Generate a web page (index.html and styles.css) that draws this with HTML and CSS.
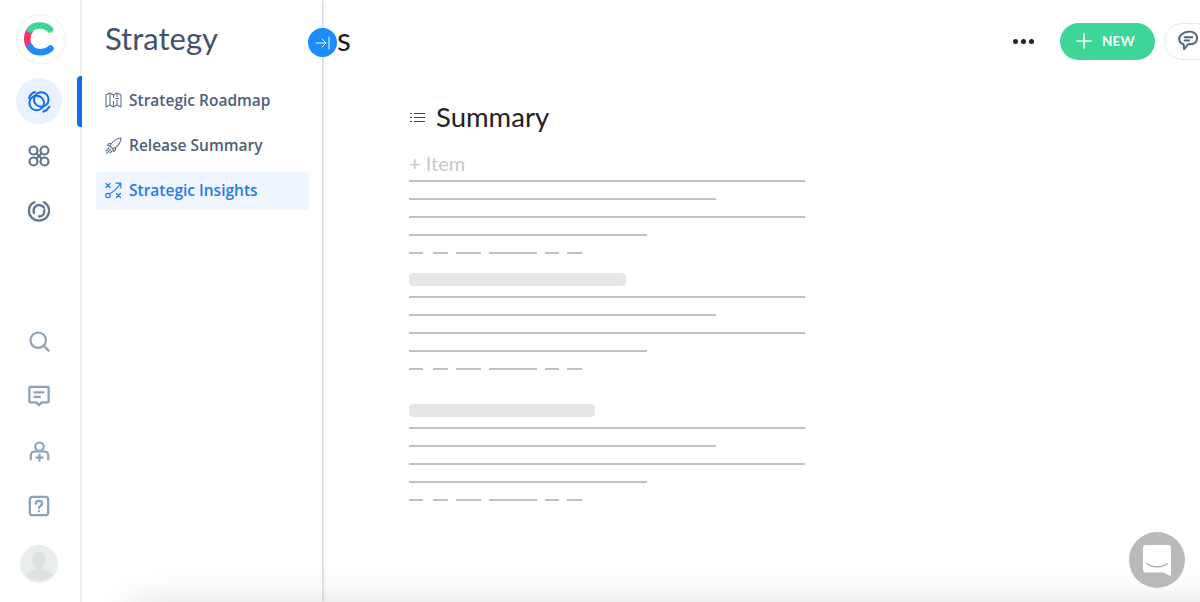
FILE: index.html
```html
<!DOCTYPE html>
<html lang="en">
<head>
<meta charset="UTF-8">
<meta name="viewport" content="width=device-width, initial-scale=1.0">
<title>Strategy</title>
<link rel="stylesheet" href="styles.css">
</head>
<body>

<div class="app">
  <!-- Icon rail -->
  <nav class="rail">
    <div class="rail-top">
      <div class="logo">
        <svg width="36" height="36" viewBox="0 0 36 36" fill="none" stroke-width="6.500" stroke-linecap="round">
          <path d="M10 8C5 13 5 22 9.500 27" stroke="#f7346b" stroke-linecap="butt"/>
          <path d="M9 8.500C13 3.200 24 3.200 29 8.500" stroke="#3fd69b"/>
          <path d="M9 26C13 32.800 24 32.800 29.500 27.500" stroke="#1e8bfa"/>
        </svg>
      </div>
      <div class="rail-item active">
        <svg width="24" height="24" viewBox="0 0 24 24" fill="none" stroke="#0f6fec" stroke-width="2" stroke-linecap="round">
          <circle cx="9.700" cy="14" r="7.300"/>
          <circle cx="14.300" cy="10.500" r="7.300"/>
          <path d="M2 9C3 6 5 4 8 3"/>
          <path d="M22.300 17.700C21 20 19 21.800 16.300 22.700"/>
        </svg>
      </div>
      <div class="rail-item">
        <svg width="24" height="24" viewBox="0 0 24 24" fill="none" stroke="#61758e" stroke-width="2.200">
          <circle cx="6.500" cy="6.500" r="4"/>
          <circle cx="17.500" cy="6.500" r="4"/>
          <circle cx="6.500" cy="17.500" r="4"/>
          <circle cx="17.500" cy="17.500" r="4"/>
          <path d="M9.500 9.500l5 5M14.500 9.500l-5 5"/>
        </svg>
      </div>
      <div class="rail-item">
        <svg width="22" height="22" viewBox="0 0 24 24" fill="none" stroke="#61758e" stroke-width="2.500" stroke-linecap="round">
          <path d="M7 2.500C2.500 4.500 .9 8 1 12c.2 6 5 10.500 11 10.500S23 18 23 12c0-4-2-7.500-5.500-9.500"/>
          <path d="M6.500 14C5 9 8.500 5 12.500 5.500c2.500.2 4 1 5 3"/>
          <path d="M17.800 11c.5 4-2 7-5.800 7"/>
        </svg>
      </div>
    </div>
    <div class="rail-bottom">
      <div class="rail-item small">
        <svg width="21" height="21" viewBox="0 0 24 24" fill="none" stroke="#8fa1b5" stroke-width="2.500" stroke-linecap="round">
          <circle cx="10.500" cy="10.500" r="8.800"/>
          <path d="M17 17l5.500 5.500"/>
        </svg>
      </div>
      <div class="rail-item small">
        <svg width="22" height="22" viewBox="0 0 24 24" fill="none" stroke="#8fa1b5" stroke-width="2.500" stroke-linecap="round" stroke-linejoin="round">
          <path d="M2.500 2h19a1 1 0 0 1 1 1v15a1 1 0 0 1-1 1H15l-3 3-3-3H2.500a1 1 0 0 1-1-1V3a1 1 0 0 1 1-1z"/>
          <path d="M7 8h10M7 13h6"/>
        </svg>
      </div>
      <div class="rail-item small">
        <svg width="21" height="21" viewBox="0 0 24 24" fill="none" stroke="#8fa1b5" stroke-width="2.500" stroke-linecap="round">
          <circle cx="12" cy="6.500" r="4.800"/>
          <path d="M2 21v-4c0-3 2-5 5-5h10c3 0 5 2 5 5v4"/>
          <path d="M12 15.500v7M8.500 19h7"/>
        </svg>
      </div>
      <div class="rail-item small">
        <svg width="22" height="22" viewBox="0 0 24 24" fill="none" stroke="#8fa1b5" stroke-width="2.500" stroke-linecap="round">
          <rect x="2" y="2" width="20" height="20" rx="3"/>
          <path d="M8.500 9.500C8.500 7.500 10 6.300 12 6.300s3.500 1.200 3.500 3c0 2.700-3.500 2.700-3.500 5"/>
          <path d="M12 17.700v.1"/>
        </svg>
      </div>
      <div class="avatar">
        <svg width="38" height="38" viewBox="0 0 38 38">
          <circle cx="19" cy="19" r="19" fill="#e9edee"/>
          <path d="M19 7c4 0 6.500 3 6.500 7.500 0 3-1 5.500-3 7.500v2.500c3 1.500 8 2.500 10 5.500a19 19 0 0 1-27 0c2-3 7-4 10-5.500V22c-2-2-3-4.500-3-7.500C12.500 10 15 7 19 7z" fill="#dde1e2"/>
        </svg>
      </div>
    </div>
    <span class="active-bar"></span>
  </nav>

  <!-- Section panel -->
  <aside class="panel">
    <h1 class="panel-title">Strategy</h1>
    <ul class="menu">
      <li class="menu-item">
        <svg width="17" height="16" viewBox="0 0 17 16" fill="none" stroke="#61758e" stroke-width="1.100" stroke-linejoin="round">
          <path d="M1 3l4-2 3.500 2L12 1l4 2v12l-4-2-3.500 2L5 13l-4 2z"/>
          <path d="M5 1v12M8.500 3v3M8.500 9v6M12 1v4M12 8v5M10 6.500h4"/>
        </svg>
        <span>Strategic Roadmap</span>
      </li>
      <li class="menu-item">
        <svg width="17" height="17" viewBox="0 0 17 17" fill="none" stroke="#61758e" stroke-width="1.100" stroke-linejoin="round" stroke-linecap="round">
          <path d="M16 1c-4 .3-7 2-9.500 5.500L5 9l3 3 2.500-1.500C14 8 15.700 5 16 1z"/>
          <path d="M6.500 6.500H4L2.500 8.500 5 9M10.500 10.500V13L8.500 14.500 8 12"/>
          <path d="M4 11l-3 3M5.500 12.500L1.500 16.300M7 14l-2 2"/>
        </svg>
        <span>Release Summary</span>
      </li>
      <li class="menu-item current">
        <svg width="17" height="17" viewBox="0 0 17 17" fill="none" stroke="#1e7cf0" stroke-width="1.200" stroke-linecap="round" stroke-linejoin="round">
          <path d="M1 1.500l4 4M5 1.500l-4 4"/>
          <path d="M11.500 11.500l4 4M15.500 11.500l-4 4"/>
          <circle cx="3" cy="13.500" r="2.200"/>
          <path d="M5 11.500C8 10 12 7 15.500 1.500M11 1.200h4.800v4.800"/>
        </svg>
        <span>Strategic Insights</span>
      </li>
    </ul>
  </aside>

  <button class="collapse-btn" type="button" aria-label="Expand">
    <svg width="16" height="14" viewBox="0 0 16 14" fill="none" stroke="#fff" stroke-width="1" stroke-linecap="round" stroke-linejoin="round">
      <path d="M1 7h10M7 3l4 4-4 4M14 1v12"/>
    </svg>
  </button>

  <!-- Main content -->
  <main class="main">
    <header class="topbar">
      <h2 class="page-title">s</h2>
      <div class="top-actions">
        <div class="dots"><i></i><i></i><i></i></div>
        <button class="new-btn" type="button">
          <svg width="16" height="16" viewBox="0 0 16 16" fill="none" stroke="#fff" stroke-width="1.500" stroke-linecap="round">
            <path d="M8 .8v14.400M.8 8h14.400"/>
          </svg>
          <span>NEW</span>
        </button>
        <button class="comment-btn" type="button" aria-label="Comments">
          <svg width="22" height="22" viewBox="0 0 20 20" fill="none" stroke="#4e6580" stroke-width="1.800" stroke-linecap="round" stroke-linejoin="round">
            <path d="M5 3.500C7.500 1 13 1 15.500 2.500c3.500 2 3.500 7 1 9-1.500 1.200-4 1.700-6.500 1.500L6.500 17.500 6 13C1 11.500.5 6.500 5 3.500z"/>
            <path d="M7 6.500h7M7 9.500h4"/>
          </svg>
        </button>
      </div>
    </header>

    <section class="doc">
      <div class="doc-heading">
        <svg width="15" height="11" viewBox="0 0 15 11" fill="none" stroke="#3a4350" stroke-width="1">
          <path d="M0 1.500h2M0 5.500h2M0 9.500h2M4 1.500h11M4 5.500h11M4 9.500h11"/>
        </svg>
        <h3>Summary</h3>
      </div>
      <div class="add-item">+ Item</div>

      <div class="skeleton">
        <div class="line w-full"></div>
        <div class="line w-long"></div>
        <div class="line w-full"></div>
        <div class="line w-mid"></div>
        <div class="dashes"><i class="d14"></i><i class="d15"></i><i class="d25"></i><i class="d48"></i><i class="d14"></i><i class="d15"></i></div>
      </div>

      <div class="block b-first"></div>
      <div class="skeleton">
        <div class="line w-full"></div>
        <div class="line w-long"></div>
        <div class="line w-full"></div>
        <div class="line w-mid"></div>
        <div class="dashes"><i class="d14"></i><i class="d15"></i><i class="d25"></i><i class="d48"></i><i class="d14"></i><i class="d15"></i></div>
      </div>

      <div class="block b-second"></div>
      <div class="skeleton">
        <div class="line w-full"></div>
        <div class="line w-long"></div>
        <div class="line w-full"></div>
        <div class="line w-mid"></div>
        <div class="dashes"><i class="d14"></i><i class="d15"></i><i class="d25"></i><i class="d48"></i><i class="d14"></i><i class="d15"></i></div>
      </div>
    </section>
  </main>

  <div class="bottom-fade"></div>

  <button class="chat-btn" type="button" aria-label="Chat">
    <svg width="28" height="31" viewBox="0 0 28 31" fill="#fff">
      <path d="M3 0h22a3 3 0 0 1 3 3v28l-8-3.500H3a3 3 0 0 1-3-3V3a3 3 0 0 1 3-3z"/>
      <path d="M4 18.500c5 4.500 15 4.500 20 0" fill="none" stroke="#a9a9a9" stroke-width="1.300" stroke-linecap="round"/>
    </svg>
  </button>
</div>

</body>
</html>
```

FILE: styles.css
```css
/* General Styles */
* {
  box-sizing: border-box;
}

html, body {
  height: 100%;
}

body {
  margin: 0;
  padding: 0;
  font-family: "Lato", "Open Sans", Arial, sans-serif;
  background-color: #fff;
  overflow: hidden;
}

button {
  font-family: inherit;
  border: none;
  padding: 0;
  cursor: pointer;
}

.app {
  position: relative;
  display: flex;
  height: 602px;
  overflow: hidden;
}

/* Icon rail */
.rail {
  position: relative;
  flex: 0 0 82px;
  display: flex;
  flex-direction: column;
  justify-content: space-between;
  padding: 14px 0 19px;
  border-right: 2px solid #f3f4f6;
}

.rail-top, .rail-bottom {
  display: flex;
  flex-direction: column;
  align-items: center;
  padding-right: 2px;
}

.logo {
  display: flex;
  align-items: center;
  justify-content: center;
  width: 50px;
  height: 50px;
  margin-left: 4px;
  border: 1px solid #eeeeee;
  border-radius: 50%;
}

.logo svg {
  margin-left: -4px;
}

.rail-item {
  display: flex;
  align-items: center;
  justify-content: center;
  width: 46px;
  height: 46px;
  margin-bottom: 9px;
  border-radius: 50%;
}

.logo + .rail-item {
  margin-top: 14px;
}

.rail-item.active {
  background-color: #e8f1fd;
}

.avatar {
  width: 38px;
  height: 38px;
  margin-top: 7px;
}

.active-bar {
  position: absolute;
  top: 76px;
  right: -2px;
  width: 5px;
  height: 51px;
  background-color: #0f6fec;
  border-radius: 4px 0 0 4px;
}

/* Section panel */
.panel {
  flex: 0 0 240px;
  padding: 0 13px 0 14px;
  background-color: #fff;
  box-shadow: 1px 0 3px rgba(0, 0, 0, 0.22);
  z-index: 2;
}

.panel-title {
  margin: 18px 0 24px 9px;
  font-size: 31px;
  line-height: 40px;
  font-weight: 400;
  color: #42526b;
}

.menu {
  list-style: none;
  margin: 0;
  padding: 0;
}

.menu-item {
  display: flex;
  align-items: center;
  gap: 7px;
  height: 38px;
  margin-bottom: 7px;
  padding: 0 0 2px 9px;
  border-radius: 3px;
  font-family: "Open Sans", Arial, sans-serif;
  font-size: 15.500px;
  font-weight: 600;
  color: #4d5f78;
}

.menu-item.current {
  background-color: #f0f6ff;
  color: #1e7cf0;
}

.collapse-btn {
  position: absolute;
  top: 28px;
  left: 308px;
  z-index: 3;
  display: flex;
  align-items: center;
  justify-content: center;
  width: 29px;
  height: 29px;
  border-radius: 50%;
  background-color: #1a8cff;
}

/* Main content */
.main {
  flex: 1;
  min-width: 0;
}

.topbar {
  display: flex;
  align-items: center;
  justify-content: space-between;
  height: 82px;
  padding-left: 15px;
}

.page-title {
  margin: -5px 0 0;
  font-size: 32px;
  font-weight: 400;
  color: #222;
}

.top-actions {
  display: flex;
  align-items: center;
  margin-right: -14px;
}

.dots {
  display: flex;
  gap: 3px;
  margin-right: 26px;
}

.dots i {
  width: 5px;
  height: 5px;
  border-radius: 50%;
  background-color: #222;
}

.new-btn {
  display: flex;
  align-items: center;
  gap: 10px;
  width: 95px;
  height: 37px;
  padding-left: 16px;
  margin-right: 9px;
  border-radius: 19px;
  background-color: #3dd598;
  color: #fff;
  font-size: 13.500px;
  font-weight: 700;
  letter-spacing: 0.2px;
}

.comment-btn {
  display: flex;
  align-items: center;
  width: 50px;
  height: 37px;
  padding-left: 12px;
  border: 1px solid #e6e8ec;
  border-radius: 19px;
  background-color: #fff;
}

/* Document */
.doc {
  margin-left: 87px;
  width: 396px;
}

.doc-heading {
  display: flex;
  align-items: center;
  gap: 11px;
  margin-top: 17px;
  padding-left: 1px;
}

.doc-heading h3 {
  margin: 0;
  font-size: 27.500px;
  line-height: 36px;
  font-weight: 400;
  color: #222;
}

.add-item {
  margin-top: 16px;
  font-size: 20px;
  line-height: 24px;
  color: #c8c8c8;
}

.skeleton {
  display: flex;
  flex-direction: column;
  gap: 16px;
}

.add-item + .skeleton {
  margin-top: 5px;
}

.line {
  height: 2px;
  background-color: #c2c2c2;
}

.w-full { width: 396px; }
.w-long { width: 307px; }
.w-mid { width: 238px; }

.dashes {
  display: flex;
  gap: 8px;
  height: 2px;
}

.dashes i {
  display: block;
  height: 2px;
  background-color: #c2c2c2;
}

.dashes i:nth-child(2) {
  margin-left: 2px;
}

.d14 { width: 14px; }
.d15 { width: 15px; }
.d25 { width: 25px; }
.d48 { width: 48px; }

.block {
  height: 13px;
  margin-bottom: 10px;
  border-radius: 4px;
  background-color: #e6e6e6;
}

.b-first {
  width: 217px;
  margin-top: 19px;
}

.b-second {
  width: 186px;
  margin-top: 34px;
}

/* Overlays */
.bottom-fade {
  position: absolute;
  left: 130px;
  right: -40px;
  top: 602px;
  height: 40px;
  box-shadow: 0 0 34px rgba(0, 0, 0, 0.13);
  z-index: 4;
}

.chat-btn {
  position: absolute;
  top: 532px;
  left: 1129px;
  z-index: 5;
  display: flex;
  align-items: center;
  justify-content: center;
  width: 56px;
  height: 56px;
  border-radius: 50%;
  background-color: #b9b9b9;
}
```
